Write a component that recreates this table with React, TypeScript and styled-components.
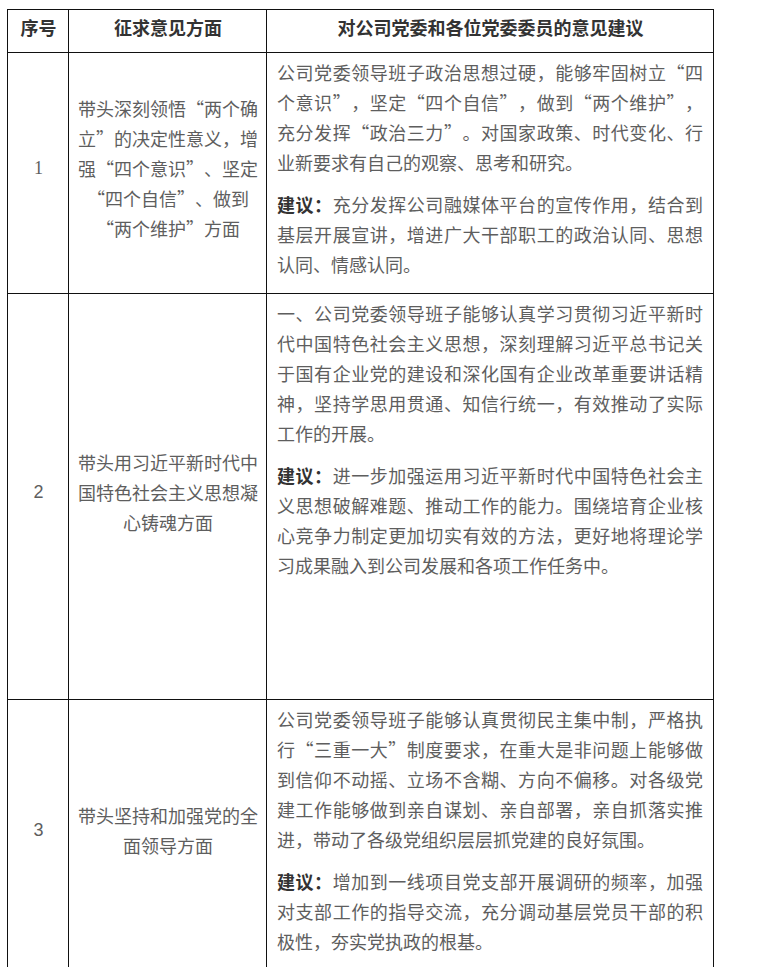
import styled, { createGlobalStyle } from 'styled-components';

const GlobalStyle = createGlobalStyle`
  html, body {
    margin: 0;
    padding: 0;
    background: #fff;
  }
  body {
    font-family: "Noto Sans CJK SC", "Liberation Sans", sans-serif;
  }
`;

type Row = {
  no: string;
  serifNo?: boolean;
  aspect: string;
  opinion: string;
  advice: string;
  height?: number;
};

const rows: Row[] = [
  {
    no: '1',
    serifNo: true,
    aspect: '带头深刻领悟“两个确立”的决定性意义，增强“四个意识”、坚定“四个自信”、做到“两个维护”方面',
    opinion:
      '公司党委领导班子政治思想过硬，能够牢固树立“四个意识”，坚定“四个自信”，做到“两个维护”，充分发挥“政治三力”。对国家政策、时代变化、行业新要求有自己的观察、思考和研究。',
    advice: '充分发挥公司融媒体平台的宣传作用，结合到基层开展宣讲，增进广大干部职工的政治认同、思想认同、情感认同。',
  },
  {
    no: '2',
    aspect: '带头用习近平新时代中国特色社会主义思想凝心铸魂方面',
    opinion:
      '一、公司党委领导班子能够认真学习贯彻习近平新时代中国特色社会主义思想，深刻理解习近平总书记关于国有企业党的建设和深化国有企业改革重要讲话精神，坚持学思用贯通、知信行统一，有效推动了实际工作的开展。',
    advice:
      '进一步加强运用习近平新时代中国特色社会主义思想破解难题、推动工作的能力。围绕培育企业核心竞争力制定更加切实有效的方法，更好地将理论学习成果融入到公司发展和各项工作任务中。',
    height: 406,
  },
  {
    no: '3',
    aspect: '带头坚持和加强党的全面领导方面',
    opinion:
      '公司党委领导班子能够认真贯彻民主集中制，严格执行“三重一大”制度要求，在重大是非问题上能够做到信仰不动摇、立场不含糊、方向不偏移。对各级党建工作能够做到亲自谋划、亲自部署，亲自抓落实推进，带动了各级党组织层层抓党建的良好氛围。',
    advice: '增加到一线项目党支部开展调研的频率，加强对支部工作的指导交流，充分调动基层党员干部的积极性，夯实党执政的根基。',
  },
];

export default function App() {
  return (
    <Page lang="zh-CN">
      <GlobalStyle />
      <Table>
        <colgroup>
          <Col $w={61} />
          <Col $w={198} />
          <Col $w={447} />
        </colgroup>
        <thead>
          <tr>
            <HeadCell>序号</HeadCell>
            <HeadCell>征求意见方面</HeadCell>
            <HeadCell>对公司党委和各位党委委员的意见建议</HeadCell>
          </tr>
        </thead>
        <tbody>
          {rows.map((r) => (
            <BodyRow key={r.no} $height={r.height}>
              <NumCell $serif={r.serifNo}>
                <P>{r.no}</P>
              </NumCell>
              <AspectCell>
                <P>{r.aspect}</P>
              </AspectCell>
              <OpinionCell>
                <P>{r.opinion}</P>
                <P>
                  <Label>建议：</Label>
                  {r.advice}
                </P>
              </OpinionCell>
            </BodyRow>
          ))}
        </tbody>
      </Table>
    </Page>
  );
}

const Page = styled.div`
  padding: 9px 0 0 7px;
`;

// full-width quote marks and no punctuation squeezing, as in the source document
const Table = styled.table`
  border-collapse: collapse;
  table-layout: fixed;
  width: 706px;
  color: #5e5e5e;
  font-size: 18px;
  line-height: 30px;
  font-feature-settings: "fwid" 1;
  text-spacing-trim: space-all;
`;

const Col = styled.col<{ $w: number }>`
  width: ${(p) => p.$w}px;
`;

const HeadCell = styled.th`
  border: 1px solid #111;
  padding: 2px 8px 10px 9px;
  text-align: center;
  font-weight: 700;
  color: #333;
`;

const BodyRow = styled.tr<{ $height?: number }>`
  height: ${(p) => (p.$height ? `${p.$height}px` : 'auto')};
`;

const Cell = styled.td`
  border: 1px solid #111;
  padding: 4px 8px 2px 9px;
`;

const NumCell = styled(Cell)<{ $serif?: boolean }>`
  text-align: center;
  vertical-align: middle;
  font-family: ${(p) => (p.$serif ? '"Liberation Serif", serif' : '"Liberation Sans", sans-serif')};
`;

const AspectCell = styled(Cell)`
  text-align: center;
  vertical-align: middle;
`;

const OpinionCell = styled(Cell)`
  vertical-align: top;
  text-align: justify;
  padding: 4px 10px 2px 10px;
`;

const P = styled.p`
  margin: 0 0 12px;
`;

const Label = styled.strong`
  font-weight: 700;
  color: #333;
`;
